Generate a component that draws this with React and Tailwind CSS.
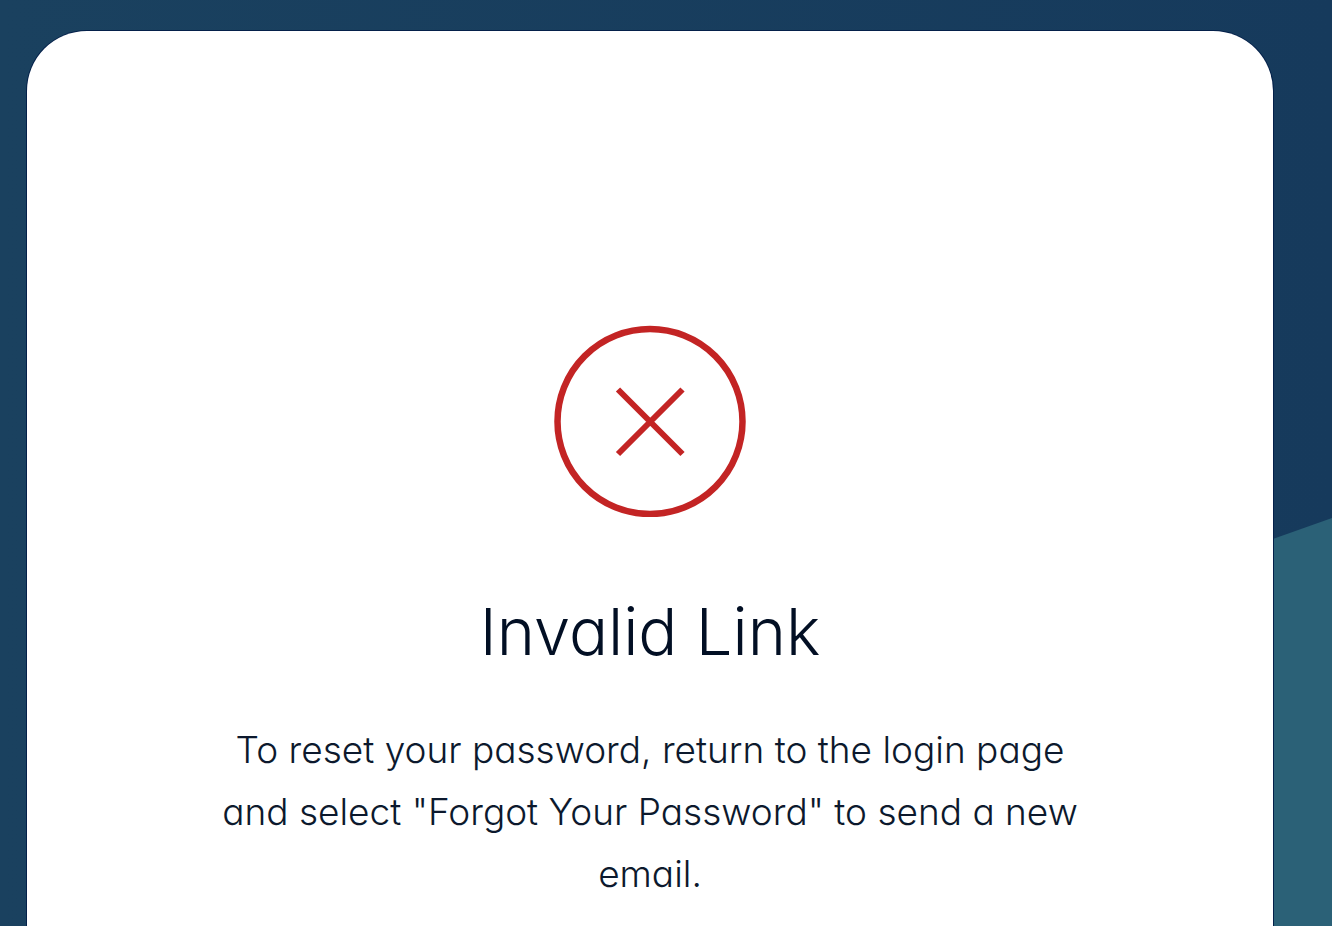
export default function App() {
  return (
    <div className="relative flex min-h-screen flex-col overflow-hidden bg-linear-to-r from-[#1a415f] to-[#163a5c] pt-[31px] pr-[59px] pl-[27px] font-[Inter,sans-serif] font-light [font-feature-settings:'cv11']">
      <div
        aria-hidden="true"
        className="absolute top-[518px] right-0 bottom-0 w-64 bg-[#2b6177] [clip-path:polygon(0_91px,100%_0,100%_100%,0_100%)]"
      />
      <main className="relative flex flex-1 flex-col items-center rounded-t-[60px] bg-white px-48 pt-[294px] text-center text-[#020f24] shadow-[0_0_0_1px_#04204a]">
        <svg
          className="size-48"
          viewBox="0 0 192 192"
          fill="none"
          stroke="#c32424"
          strokeWidth="6.5"
          role="img"
          aria-label="Error"
        >
          <circle cx="96" cy="96.5" r="92.5" />
          <path d="M64 64.5 128.5 129M128.5 64.5 64 129" strokeWidth="6" />
        </svg>
        <h1 className="mt-[75px] text-[65px] leading-[80px]">Invalid Link</h1>
        <p className="mt-[47px] text-[37px] leading-[62px] text-[#0c192d]">
          To reset your password, return to the login page and select "Forgot Your Password" to send a new email.
        </p>
      </main>
    </div>
  );
}
